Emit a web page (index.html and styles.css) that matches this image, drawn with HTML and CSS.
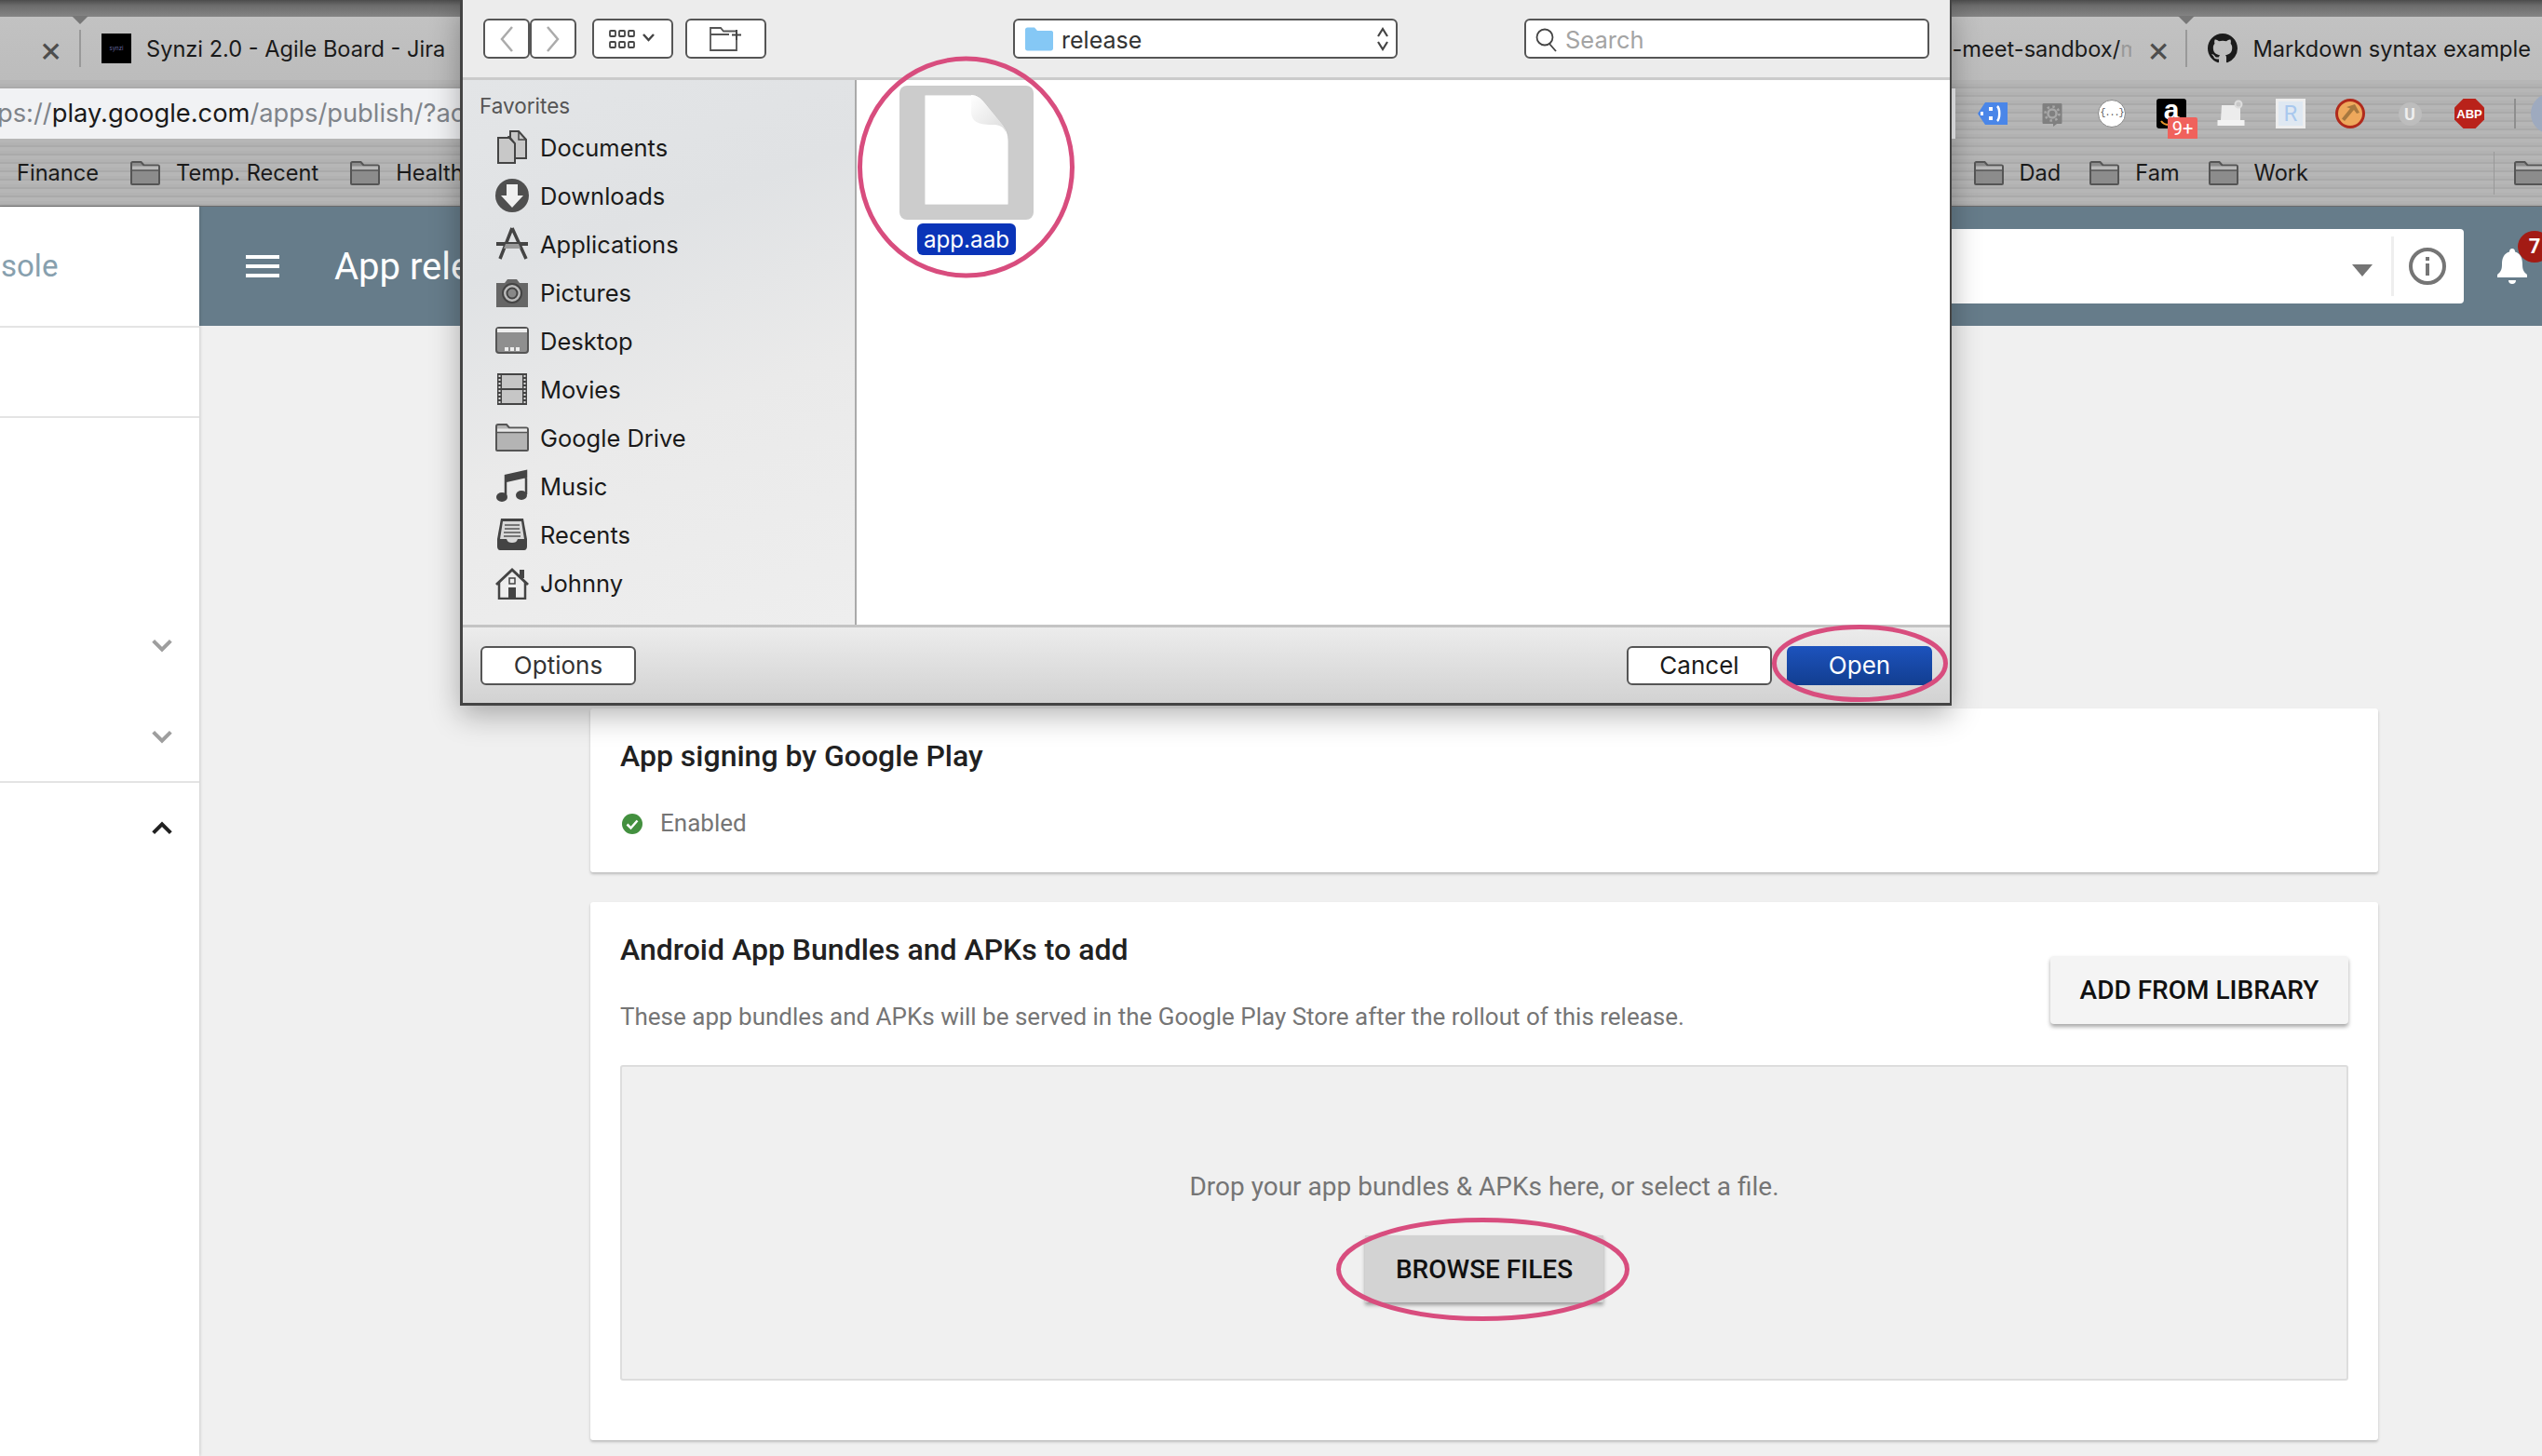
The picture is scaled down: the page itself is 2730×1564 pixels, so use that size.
FILE: index.html
```html
<!DOCTYPE html>
<html lang="en">
<head>
	<meta charset="UTF-8">
	<title>App releases</title>
	<link rel="stylesheet" href="styles.css">
</head>
<body>
	<svg class="defs" width="0" height="0">
		<symbol id="folder" viewBox="0 0 32 26">
			<path d="M1 24V2.500C1 1.600 1.600 1 2.500 1h9l3 3.500h15c.9 0 1.500.6 1.500 1.500v18c0 .6-.4 1-1 1H2c-.6 0-1-.4-1-1z" fill="#8c8c8c" stroke="#555" stroke-width="2"/>
			<path d="M2 5.500h28V10H2z" fill="#b8b8b8"/>
			<path d="M2 10h28" stroke="#555" stroke-width="1.500"/>
		</symbol>
		<symbol id="chevron" viewBox="0 0 24 24">
			<path d="M5 8.500l7 7 7-7" fill="none" stroke="currentColor" stroke-width="3"/>
		</symbol>
	</svg>

	<header class="browser">
		<div class="tabs">
			<div class="tab-group">
				<span class="tab-close tab-close-left">×</span>
				<span class="tab-sep"></span>
				<span class="favicon">synzi</span>
				<span class="tab-title">Synzi 2.0 - Agile Board - Jira</span>
			</div>
			<div class="tab-group">
				<span class="tab-title tab-title-cut">-meet-sandbox/<span class="tab-fade">m</span></span>
				<span class="tab-close">×</span>
				<span class="tab-sep"></span>
				<svg class="github" viewBox="0 0 16 16"><path fill="#1b1b1b" d="M8 0C3.580 0 0 3.580 0 8c0 3.540 2.290 6.530 5.470 7.590.4.070.55-.17.55-.38 0-.19-.01-.82-.01-1.490-2.010.37-2.530-.49-2.690-.94-.09-.23-.48-.94-.82-1.130-.28-.15-.68-.52-.01-.53.63-.01 1.080.58 1.230.82.72 1.210 1.870.87 2.330.66.07-.52.28-.87.51-1.070-1.780-.2-3.640-.89-3.640-3.950 0-.87.31-1.590.82-2.150-.08-.2-.36-1.020.08-2.120 0 0 .67-.21 2.200.82.64-.18 1.320-.27 2-.27.68 0 1.360.09 2 .27 1.530-1.040 2.200-.82 2.200-.82.44 1.100.16 1.920.08 2.120.51.56.82 1.270.82 2.150 0 3.070-1.870 3.750-3.650 3.950.29.25.54.73.54 1.480 0 1.070-.01 1.930-.01 2.200 0 .21.15.46.55.38A8.013 8.013 0 0016 8c0-4.420-3.580-8-8-8z"/></svg>
				<span class="tab-title">Markdown syntax example</span>
			</div>
		</div>

		<div class="toolbar">
			<div class="address"><span class="address-dim">ps://</span>play.google.com<span class="address-dim">/apps/publish/?ac</span></div>
			<div class="extensions">
				<svg class="ext" viewBox="0 0 32 32"><path d="M8 4h24v24H8L0 16z" fill="#4a86e8"/><rect x="3" y="14" width="3" height="4" fill="#fff"/><rect x="12" y="9" width="4" height="4" fill="#fff"/><rect x="12" y="19" width="4" height="4" fill="#fff"/><path d="M21 8c3 3 3 13 0 16" fill="none" stroke="#fff" stroke-width="2.500"/></svg>
				<svg class="ext" viewBox="0 0 32 32"><path d="M7 5h18c1 0 1.500.5 1.500 1.500v19c0 1-.5 1.500-1.500 1.500h-4L17 30v-3H7c-1 0-1.500-.5-1.500-1.500v-19C5.500 5.500 6 5 7 5z" fill="#808080"/><circle cx="16" cy="16" r="4.500" fill="none" stroke="#a8a8a8" stroke-width="2.500"/><circle cx="16" cy="16" r="7.500" fill="none" stroke="#a8a8a8" stroke-width="2.500" stroke-dasharray="2.500 3.400"/></svg>
				<div class="ext ext-braces">{...}</div>
				<div class="ext ext-amazon">a<svg class="amazon-smile" viewBox="0 0 12 8"><path d="M1 1c2 3 4 4 8 4" fill="none" stroke="#e8962c" stroke-width="2"/></svg><span class="amazon-badge">9+</span></div>
				<svg class="ext" viewBox="0 0 32 32"><path d="M6 7h16c4 0 4 1.500 4 3v13H5z" fill="#ececec"/><rect x="1.500" y="23" width="29" height="6" fill="#f2f2f2"/><circle cx="24" cy="6" r="3.500" fill="#c8c8c8" stroke="#ddd" stroke-width="2"/></svg>
				<div class="ext ext-r">R</div>
				<svg class="ext" viewBox="0 0 32 32"><circle cx="16" cy="16" r="14.500" fill="#eea85c" stroke="#b02a1c" stroke-width="3"/><path d="M12 9l9-3 5 9-3 1-3-4-10 12-3-2.500 9-11z" fill="#a7783f"/></svg>
				<div class="ext ext-u">U</div>
				<svg class="ext" viewBox="0 0 32 32"><path d="M9.500 0h13L32 9.500v13L22.500 32h-13L0 22.500v-13z" fill="#b9221a"/><text x="16" y="21" class="abp-text" text-anchor="middle">ABP</text></svg>
				<span class="ext-sep"></span>
				<span class="avatar"></span>
			</div>
		</div>

		<div class="bookmarks">
			<div class="bookmark-group">
				<span class="bookmark">Finance</span>
				<span class="bookmark"><svg class="folder"><use href="#folder"/></svg>Temp. Recent</span>
				<span class="bookmark"><svg class="folder"><use href="#folder"/></svg>Health</span>
			</div>
			<div class="bookmark-group bookmark-group-right">
				<span class="bookmark"><svg class="folder"><use href="#folder"/></svg>Dad</span>
				<span class="bookmark"><svg class="folder"><use href="#folder"/></svg>Fam</span>
				<span class="bookmark"><svg class="folder"><use href="#folder"/></svg>Work</span>
				<span class="bookmark-sep"></span>
				<svg class="folder folder-last"><use href="#folder"/></svg>
			</div>
		</div>
	</header>

	<div class="page">
		<aside class="side">
			<div class="side-logo">sole</div>
			<div class="side-section side-section-small"></div>
			<div class="side-section side-section-rows">
				<div class="side-row"><svg class="chevron"><use href="#chevron"/></svg></div>
				<div class="side-row"><svg class="chevron"><use href="#chevron"/></svg></div>
			</div>
			<div class="side-row"><svg class="chevron chevron-up"><use href="#chevron"/></svg></div>
		</aside>

		<main class="main">
			<div class="app-bar">
				<div class="hamburger"><span></span><span></span><span></span></div>
				<div class="app-title">App releases</div>
				<div class="search-box">
					<span class="search-caret"></span>
					<span class="search-divider"></span>
					<svg class="info" viewBox="0 0 40 40"><circle cx="20" cy="20" r="18" fill="none" stroke="#757575" stroke-width="4"/><rect x="18" y="17" width="4" height="13" fill="#757575"/><rect x="18" y="10" width="4" height="4" fill="#757575"/></svg>
				</div>
				<div class="bell">
					<svg viewBox="0 0 32 42" width="32" height="42"><path d="M16 2c2 0 3 1.500 3 3.500C25 7.500 27 12 27 19c0 5 1 8 5 11v3H0v-3c4-3 5-6 5-11C5 12 7 7.500 13 5.500 13 3.500 14 2 16 2z" fill="#fff"/><path d="M12 36h8c0 2.500-1.500 4-4 4s-4-1.500-4-4z" fill="#fff"/></svg>
					<span class="bell-badge">7</span>
				</div>
			</div>

			<div class="content">
				<section class="card card-signing">
					<h2 class="card-title">App signing by Google Play</h2>
					<div class="status">
						<svg class="status-icon" viewBox="0 0 22 22"><circle cx="11" cy="11" r="11" fill="#43903f"/><path d="M5.500 11.500l4 4 7-8" fill="none" stroke="#fff" stroke-width="2.500"/></svg>
						Enabled
					</div>
				</section>

				<section class="card card-bundles">
					<div class="card-head">
						<div>
							<h2 class="card-title">Android App Bundles and APKs to add</h2>
							<p class="card-desc">These app bundles and APKs will be served in the Google Play Store after the rollout of this release.</p>
						</div>
						<button class="btn btn-library">ADD FROM LIBRARY</button>
					</div>
					<div class="dropzone">
						<p class="dropzone-text">Drop your app bundles &amp; APKs here, or select a file.</p>
						<button class="btn btn-browse">BROWSE FILES</button>
					</div>
				</section>
			</div>
		</main>
	</div>

	<div class="dialog">
		<div class="dlg-toolbar">
			<div class="nav-buttons">
				<span class="dlg-btn nav-btn"><svg width="16" height="30" viewBox="0 0 16 30"><path d="M14 2L3 15l11 13" fill="none" stroke="#ababab" stroke-width="2.500"/></svg></span>
				<span class="dlg-btn nav-btn"><svg width="16" height="30" viewBox="0 0 16 30"><path d="M2 2l11 13L2 28" fill="none" stroke="#ababab" stroke-width="2.500"/></svg></span>
			</div>
			<span class="dlg-btn view-btn">
				<svg width="52" height="22" viewBox="0 0 52 22"><g fill="none" stroke="#444" stroke-width="1.800"><rect x="1" y="2" width="6" height="6" rx="1"/><rect x="11" y="2" width="6" height="6" rx="1"/><rect x="21" y="2" width="6" height="6" rx="1"/><rect x="1" y="14" width="6" height="6" rx="1"/><rect x="11" y="14" width="6" height="6" rx="1"/><rect x="21" y="14" width="6" height="6" rx="1"/><path d="M37 6l5.500 6 5.500-6" stroke-width="2.500"/></g></svg>
			</span>
			<span class="dlg-btn folder-btn">
				<svg width="36" height="26" viewBox="0 0 36 26"><path d="M29 14v11H1V1h11l3 3.500h14M1 8h20" fill="none" stroke="#555" stroke-width="1.800"/><path d="M29 3v11M24 8.500h10" fill="none" stroke="#444" stroke-width="2"/></svg>
			</span>
			<span class="dlg-btn path-popup">
				<svg class="blue-folder" viewBox="0 0 30 26"><path d="M0 3C0 1.500 1 .5 2.500.5H10L13 4h15c1.500 0 2 1 2 2v17c0 1.500-1 2.500-2.500 2.500h-25C1 25.500 0 24.500 0 23z" fill="#85c8f5"/></svg>
				<span class="path-name">release</span>
				<svg class="updown" width="14" height="28" viewBox="0 0 14 28"><path d="M2 11l5-8 5 8M2 17l5 8 5-8" fill="none" stroke="#444" stroke-width="2.200"/></svg>
			</span>
			<span class="dlg-btn search-field">
				<svg width="26" height="28" viewBox="0 0 26 28"><circle cx="11" cy="11" r="8.500" fill="none" stroke="#444" stroke-width="1.800"/><path d="M16 18l7 8" stroke="#444" stroke-width="1.800"/></svg>
				<span class="search-placeholder">Search</span>
			</span>
		</div>

		<div class="dlg-body">
			<nav class="dlg-side">
				<div class="fav-title">Favorites</div>
				<div class="fav-row">
					<svg class="fav-icon" viewBox="0 0 36 36"><path d="M3 8h12l6 6v21H3z" fill="#c8c8c8" stroke="#444" stroke-width="2"/><path d="M16 1h9l8 9v20H21V14l-6-7h1z" fill="#c8c8c8" stroke="#444" stroke-width="2"/><path d="M25 1v9h8" fill="none" stroke="#444" stroke-width="1.500"/></svg>
					Documents
				</div>
				<div class="fav-row">
					<svg class="fav-icon" viewBox="0 0 36 36"><circle cx="18" cy="18" r="18" fill="#4f4f4f"/><path d="M12 6h12v12h6L18 31 6 18h6z" fill="#f0f0f0"/></svg>
					Downloads
				</div>
				<div class="fav-row">
					<svg class="fav-icon" viewBox="0 0 36 36"><path d="M18 1l15 33M18 1L5 34" fill="none" stroke="#444" stroke-width="3.500"/><path d="M1 18h34" stroke="#444" stroke-width="4"/><path d="M9 23h18l-2-5H11z" fill="#999"/></svg>
					Applications
				</div>
				<div class="fav-row">
					<svg class="fav-icon" viewBox="0 0 36 36"><path d="M1 8h9l3-4h10l3 4h9v26H1z" fill="#666"/><circle cx="18" cy="19" r="10" fill="#bbb" stroke="#444" stroke-width="2"/><circle cx="18" cy="19" r="5.500" fill="#888" stroke="#444" stroke-width="2"/></svg>
					Pictures
				</div>
				<div class="fav-row">
					<svg class="fav-icon" viewBox="0 0 36 30"><rect x="1" y="1" width="34" height="27" rx="3" fill="#8f8f8f" stroke="#555" stroke-width="2"/><rect x="2" y="2" width="32" height="4" fill="#eee"/><rect x="10" y="22" width="4" height="4" fill="#eee"/><rect x="16" y="22" width="4" height="4" fill="#eee"/><rect x="22" y="22" width="4" height="4" fill="#eee"/></svg>
					Desktop
				</div>
				<div class="fav-row">
					<svg class="fav-icon" viewBox="0 0 36 36"><rect x="2" y="1" width="32" height="34" fill="#444"/><rect x="7" y="3" width="22" height="14" fill="#c6c6c6"/><rect x="7" y="19" width="22" height="14" fill="#c6c6c6"/><path d="M4.500 3v30M31.500 3v30" stroke="#ddd" stroke-width="2" stroke-dasharray="2 2"/></svg>
					Movies
				</div>
				<div class="fav-row">
					<svg class="fav-icon" viewBox="0 0 36 30"><path d="M1 28V3c0-1 .6-2 2-2h9l3 3.500h18c1.400 0 2 .6 2 2V28c0 .6-.4 1-1 1H2c-.6 0-1-.4-1-1z" fill="#b4b4b4" stroke="#555" stroke-width="2"/><path d="M2 5.500h32V9H2z" fill="#e8e8e8"/><path d="M2 9.500h32" stroke="#555" stroke-width="1.500"/></svg>
					Google Drive
				</div>
				<div class="fav-row">
					<svg class="fav-icon" viewBox="0 0 36 36"><path d="M11 7v22M33 2v25M11 7l22-5v6l-22 5z" fill="#444" stroke="#444" stroke-width="2.500"/><ellipse cx="7" cy="30" rx="6" ry="5" fill="#444"/><ellipse cx="28" cy="28" rx="6" ry="5" fill="#444"/></svg>
					Music
				</div>
				<div class="fav-row">
					<svg class="fav-icon" viewBox="0 0 36 36"><path d="M6 1h24l4 22v8c0 2-1 4-3 4H5c-2 0-3-2-3-4v-8z" fill="#444"/><path d="M8 4h20l3 19h-7c-1 3-3 4-6 4s-5-1-6-4H5z" fill="#d8d8d8"/><path d="M10 8h16M10 12h16M9 16h18M9 20h18" stroke="#555" stroke-width="1.500"/></svg>
					Recents
				</div>
				<div class="fav-row">
					<svg class="fav-icon" viewBox="0 0 36 36"><path d="M4 17v18h28V17" fill="#eee" stroke="#444" stroke-width="2.500"/><path d="M0 19L18 2l18 17-2 2L18 6 2 21z" fill="#444"/><rect x="26" y="4" width="5" height="9" fill="#444"/><rect x="15" y="13" width="6" height="6" fill="#eee" stroke="#444" stroke-width="1.500"/><rect x="14" y="23" width="8" height="12" fill="#444"/></svg>
					Johnny
				</div>
			</nav>
			<div class="dlg-files">
				<div class="file">
					<div class="file-thumb">
						<svg width="90" height="118" viewBox="0 0 90 118"><defs><linearGradient id="fold" x1="0" y1="0" x2="1" y2="1"><stop offset="0" stop-color="#fff"/><stop offset="1" stop-color="#dcdcdc"/></linearGradient></defs><path d="M0 0h50c6 0 10 3 14 8l18 22c6 7 8 12 8 20v68H0z" fill="#fff" stroke="#bbb" stroke-width=".6"/><path d="M50 0c6 0 10 3 14 8l18 22c3 4 5 6 5 10-2-6-7-8-13-8-14 0-24-2-24-14z" fill="url(#fold)"/></svg>
					</div>
					<span class="file-name">app.aab</span>
				</div>
			</div>
		</div>

		<div class="dlg-footer">
			<span class="dlg-btn action-btn options-btn">Options</span>
			<span class="dlg-btn action-btn">Cancel</span>
			<span class="action-btn open-btn">Open</span>
		</div>
	</div>

	<svg class="marks" width="2730" height="1564">
		<ellipse cx="1037.500" cy="179.500" rx="114" ry="116.500"/>
		<ellipse cx="1997.500" cy="712.500" rx="92" ry="39"/>
		<ellipse cx="1592.500" cy="1363.500" rx="155" ry="53"/>
	</svg>
</body>
</html>
```

FILE: styles.css
```css
* {
	margin: 0;
	padding: 0;
	box-sizing: border-box;
}
body {
	width: 2730px;
	height: 1564px;
	overflow: hidden;
	position: relative;
	background: #f0f0f0;
	font-family: "Roboto", sans-serif;
}
.defs {
	position: absolute;
}

/* browser chrome */
.browser {
	height: 222px;
	border-bottom: 1px solid #6a6a6a;
	background: repeating-linear-gradient(180deg, #b2b2b2 0, #b2b2b2 3px, #aaa 3px, #aaa 5px, #b6b6b6 5px, #b6b6b6 9px);
	font-family: "Inter", sans-serif;
	color: #1a1a1a;
}
.tabs {
	height: 86px;
	display: flex;
	justify-content: space-between;
	padding: 18px 12px 0 0;
	background: linear-gradient(180deg, #4c4c4c 0, #6c6c6c 6px, #858585 18px, #c2c2c2 18px, #bcbcbc 86px);
}
.tab-group {
	display: flex;
	align-items: center;
	height: 68px;
}
.tab-title {
	font-size: 23.600px;
	white-space: nowrap;
}
.tab-title-cut {
	width: 192px;
	overflow: hidden;
}
.tab-fade {
	color: #999;
}
.tab-close {
	font-size: 38px;
	line-height: 1;
	color: #4d4d4d;
	width: 20px;
	text-align: center;
	margin-left: 17px;
}
.tab-close-left {
	margin: 0 2px 0 42px;
}
.tab-sep {
	width: 2px;
	height: 40px;
	background: #999;
	margin: 0 22px 0 21px;
}
.tab-sep::before {
	content: "";
	display: block;
	width: 0;
	margin: -15px 0 0 -8px;
	border: 9px solid transparent;
	border-top-color: #777;
	border-bottom: 0;
}
.favicon {
	width: 32px;
	height: 32px;
	background: #000;
	color: #6a6aa0;
	font-size: 6px;
	line-height: 32px;
	text-align: center;
	margin-right: 16px;
}
.github {
	width: 32px;
	height: 32px;
	margin-right: 17px;
}
.toolbar {
	height: 64px;
	display: flex;
	padding-top: 9px;
}
.address {
	flex: 1;
	height: 54px;
	background: #f1f2f4;
	font-size: 27.300px;
	line-height: 54px;
	text-indent: -3px;
	white-space: nowrap;
	overflow: hidden;
	color: #1a1a1a;
}
.address-dim {
	color: #7f848a;
}
.extensions {
	flex: none;
	width: 606px;
	margin-left: 24px;
	display: flex;
	align-items: center;
	gap: 32px;
	overflow: hidden;
	height: 54px;
}
.ext {
	flex: none;
	width: 32px;
	height: 32px;
	position: relative;
}
.ext-braces {
	width: 30px;
	height: 30px;
	margin: 0 1px;
	background: #fff;
	border: 1px solid #888;
	border-radius: 50%;
	font-family: "Liberation Mono", monospace;
	font-size: 10px;
	letter-spacing: -1px;
	line-height: 28px;
	text-align: center;
	color: #555;
}
.ext-amazon {
	background: #000;
	border-radius: 3px;
	color: #fff;
	font-family: "Liberation Sans", sans-serif;
	font-size: 30px;
	font-weight: bold;
	line-height: 24px;
	text-align: center;
}
.amazon-smile {
	position: absolute;
	left: 4px;
	bottom: 1px;
	width: 12px;
	height: 8px;
}
.amazon-badge {
	position: absolute;
	left: 12px;
	top: 20px;
	width: 32px;
	height: 24px;
	background: #f0625c;
	border-radius: 2px;
	font-family: "Roboto", sans-serif;
	font-size: 20px;
	font-weight: 400;
	line-height: 24px;
}
.ext-r {
	background: #dfe8f2;
	border: 3px solid #eee;
	color: #a9c8ee;
	font-family: "Roboto", sans-serif;
	font-size: 24px;
	line-height: 26px;
	text-align: center;
}
.ext-u {
	width: 25px;
	height: 25px;
	margin: 0 3.500px;
	border-radius: 50%;
	background: #bdbdbd;
	color: #eee;
	font-family: "Roboto", sans-serif;
	font-size: 18px;
	font-weight: bold;
	line-height: 26px;
	text-align: center;
}
.abp-text {
	font-family: "Liberation Sans", sans-serif;
	font-size: 13px;
	font-weight: bold;
	fill: #fff;
}
.ext-sep {
	flex: none;
	width: 2px;
	height: 32px;
	background: #8e8e8e;
}
.avatar {
	flex: none;
	width: 44px;
	height: 44px;
	border-radius: 50%;
	background: #9eaabf;
	margin-left: -16px;
}
.bookmarks {
	height: 71px;
	display: flex;
	justify-content: space-between;
	align-items: center;
	padding: 0 0 0 18px;
	overflow: hidden;
}
.bookmark-group {
	display: flex;
	align-items: center;
	gap: 34px;
	flex: none;
}
.bookmark-group-right {
	margin-right: -2px;
	gap: 31px;
}
.bookmark {
	display: flex;
	align-items: center;
	font-size: 23.600px;
	white-space: nowrap;
}
.folder {
	flex: none;
	width: 32px;
	height: 26px;
	margin-right: 17px;
}
.folder-last {
	margin: 0 0 0 -10px;
}
.bookmark-sep {
	width: 1px;
	height: 46px;
	background: #999;
	margin-left: 168px;
}

/* play console page */
.page {
	display: flex;
	height: 1342px;
}
.side {
	flex: none;
	width: 214px;
	background: #fff;
	box-shadow: 1px 0 3px rgba(0, 0, 0, 0.15);
	position: relative;
}
.side-logo {
	height: 130px;
	border-bottom: 2px solid #e4e4e4;
	font-size: 33px;
	line-height: 128px;
	color: #87a0ae;
	padding-left: 1px;
}
.side-section {
	border-bottom: 2px solid #e4e4e4;
}
.side-section-small {
	height: 97px;
}
.side-section-rows {
	padding-top: 195px;
	height: 392px;
}
.side-row {
	height: 98px;
	display: flex;
	align-items: center;
	justify-content: flex-end;
	padding-right: 24px;
}
.chevron {
	width: 32px;
	height: 32px;
	color: #9e9e9e;
}
.chevron-up {
	transform: rotate(180deg);
	color: #212121;
}
.main {
	flex: 1;
	display: flex;
	flex-direction: column;
}
.app-bar {
	height: 128px;
	background: #667c8a;
	display: flex;
	align-items: center;
	padding-left: 50px;
	color: #fff;
}
.hamburger {
	width: 36px;
}
.hamburger span {
	display: block;
	height: 4px;
	background: #fff;
	margin: 6px 0;
}
.app-title {
	font-size: 40px;
	margin-left: 59px;
	white-space: nowrap;
}
.search-box {
	margin-left: auto;
	width: 1200px;
	height: 80px;
	background: #fff;
	border-radius: 4px;
	display: flex;
	align-items: center;
	justify-content: flex-end;
	padding-right: 19px;
}
.search-caret {
	width: 0;
	border: 11px solid transparent;
	border-top: 13px solid #757575;
	border-bottom: 0;
	margin-top: 8px;
}
.search-divider {
	width: 3px;
	height: 64px;
	background: #eee;
	margin: 0 16px 0 20px;
}
.info {
	width: 40px;
	height: 40px;
}
.bell {
	margin: 0 16px 0 36px;
	width: 32px;
	height: 42px;
	position: relative;
}
.bell-badge {
	position: absolute;
	left: 22px;
	top: -17px;
	width: 36px;
	height: 34px;
	border-radius: 50%;
	background: #a31b14;
	font-size: 22px;
	font-weight: bold;
	line-height: 34px;
	text-align: center;
}
.content {
	padding: 411px 0 0 420px;
}
.card {
	width: 1920px;
	background: #fff;
	border-radius: 3px;
	box-shadow: 0 2px 3px rgba(0, 0, 0, 0.22);
	padding: 0 32px;
}
.card-signing {
	height: 176px;
	padding-top: 31px;
}
.card-bundles {
	height: 578px;
	margin-top: 32px;
}
.card-title {
	font-size: 32px;
	font-weight: 500;
	line-height: 40px;
	color: #212121;
}
.status {
	display: flex;
	align-items: center;
	margin-top: 32px;
	font-size: 26px;
	line-height: 40px;
	color: #757575;
}
.status-icon {
	width: 22px;
	height: 22px;
	margin: 2px 19px 0 2px;
}
.card-head {
	display: flex;
	justify-content: space-between;
	padding-top: 31px;
}
.card-desc {
	margin-top: 32px;
	font-size: 26px;
	line-height: 40px;
	color: #757575;
}
.btn {
	border: 0;
	font-family: "Roboto", sans-serif;
	font-weight: 500;
	font-size: 28px;
	color: #111;
}
.btn-library {
	width: 320px;
	height: 73px;
	margin-top: 27px;
	background: #f4f4f4;
	border-radius: 4px;
	box-shadow: 0 3px 4px rgba(0, 0, 0, 0.35);
}
.dropzone {
	margin-top: 32px;
	height: 339px;
	background: #f0f0f0;
	border: 2px solid #ddd;
	border-radius: 3px;
	padding-top: 109px;
	text-align: center;
}
.dropzone-text {
	font-size: 28px;
	line-height: 40px;
	color: #757575;
}
.btn-browse {
	display: block;
	width: 256px;
	height: 72px;
	margin: 32px auto 0;
	background: #d3d3d3;
	box-shadow: 0 3px 4px rgba(0, 0, 0, 0.35);
}

/* file dialog */
.dialog {
	position: absolute;
	left: 494px;
	top: 0;
	width: 1602px;
	height: 758px;
	display: flex;
	flex-direction: column;
	border: solid #444;
	border-width: 0 2px 3px 3px;
	box-shadow: 0 10px 30px rgba(0, 0, 0, 0.3);
	background: #ececec;
	font-family: "Inter", sans-serif;
	color: #1a1a1a;
}
.dlg-toolbar {
	height: 86px;
	border-bottom: 3px solid #cbcbcb;
	display: flex;
	align-items: flex-start;
	padding: 20px 0 0 22px;
}
.dlg-btn {
	display: flex;
	align-items: center;
	justify-content: center;
	height: 43px;
	background: #fff;
	border: 2px solid #555;
	border-radius: 6px;
}
.nav-buttons {
	display: flex;
}
.nav-btn {
	width: 50px;
}
.view-btn {
	width: 87px;
	margin-left: 17px;
}
.folder-btn {
	width: 87px;
	margin-left: 13px;
}
.path-popup {
	width: 413px;
	margin-left: 265px;
	justify-content: flex-start;
	padding: 2px 7px 0 11px;
	font-size: 25px;
	color: #333;
}
.blue-folder {
	width: 30px;
	height: 26px;
	margin-top: -2px;
}
.path-name {
	margin-left: 9px;
}
.updown {
	margin: -2px 0 0 auto;
}
.search-field {
	width: 435px;
	margin-left: 136px;
	justify-content: flex-start;
	padding: 2px 0 0 9px;
	font-size: 25.500px;
}
.search-placeholder {
	margin-left: 7px;
	color: #a4a4a4;
}
.dlg-body {
	flex: 1;
	display: flex;
	min-height: 0;
	border-bottom: 3px solid #c4c4c4;
}
.dlg-side {
	flex: none;
	width: 423px;
	padding: 15px 0 0 18px;
	border-right: 2px solid #aaa;
	background: linear-gradient(160deg, #e3e5e7 0, #e0e2e4 30%, #eaeaea 60%, #eeeeee 100%);
}
.fav-title {
	font-size: 22.500px;
	line-height: 26px;
	color: #555;
}
.fav-row {
	display: flex;
	align-items: center;
	height: 52px;
	font-size: 25.500px;
}
.fav-title + .fav-row {
	margin-top: 5px;
}
.fav-icon {
	flex: none;
	width: 36px;
	height: 36px;
	margin: 0 12px 0 17px;
}
.dlg-files {
	flex: 1;
	background: #fff;
	padding: 6px 0 0 46px;
}
.file {
	width: 144px;
	display: flex;
	flex-direction: column;
	align-items: center;
}
.file-thumb {
	width: 144px;
	height: 144px;
	background: #ccc;
	border-radius: 8px;
	padding: 10px 27px;
}
.file-name {
	margin-top: 4px;
	height: 34px;
	padding: 0 7px;
	background: #0a34b8;
	border-radius: 6px;
	color: #fff;
	font-size: 24.200px;
	line-height: 35px;
}
.dlg-footer {
	height: 81px;
	display: flex;
	align-items: flex-start;
	padding: 20px 19px 0 19px;
	background: linear-gradient(180deg, #ececec 0, #d2d2d2 100%);
}
.action-btn {
	width: 156px;
	height: 42px;
	font-size: 26px;
	line-height: 38px;
}
.options-btn {
	width: 167px;
	margin-right: auto;
	color: #333;
}
.open-btn {
	margin-left: 16px;
	border-radius: 6px;
	background: linear-gradient(180deg, #1d53bd 0, #123e90 100%);
	color: #fff;
	text-align: center;
	line-height: 42px;
}

/* red circles drawn over the screenshot */
.marks {
	position: absolute;
	left: 0;
	top: 0;
	pointer-events: none;
}
.marks ellipse {
	fill: none;
	stroke: #d84d7e;
	stroke-width: 5;
}
```
